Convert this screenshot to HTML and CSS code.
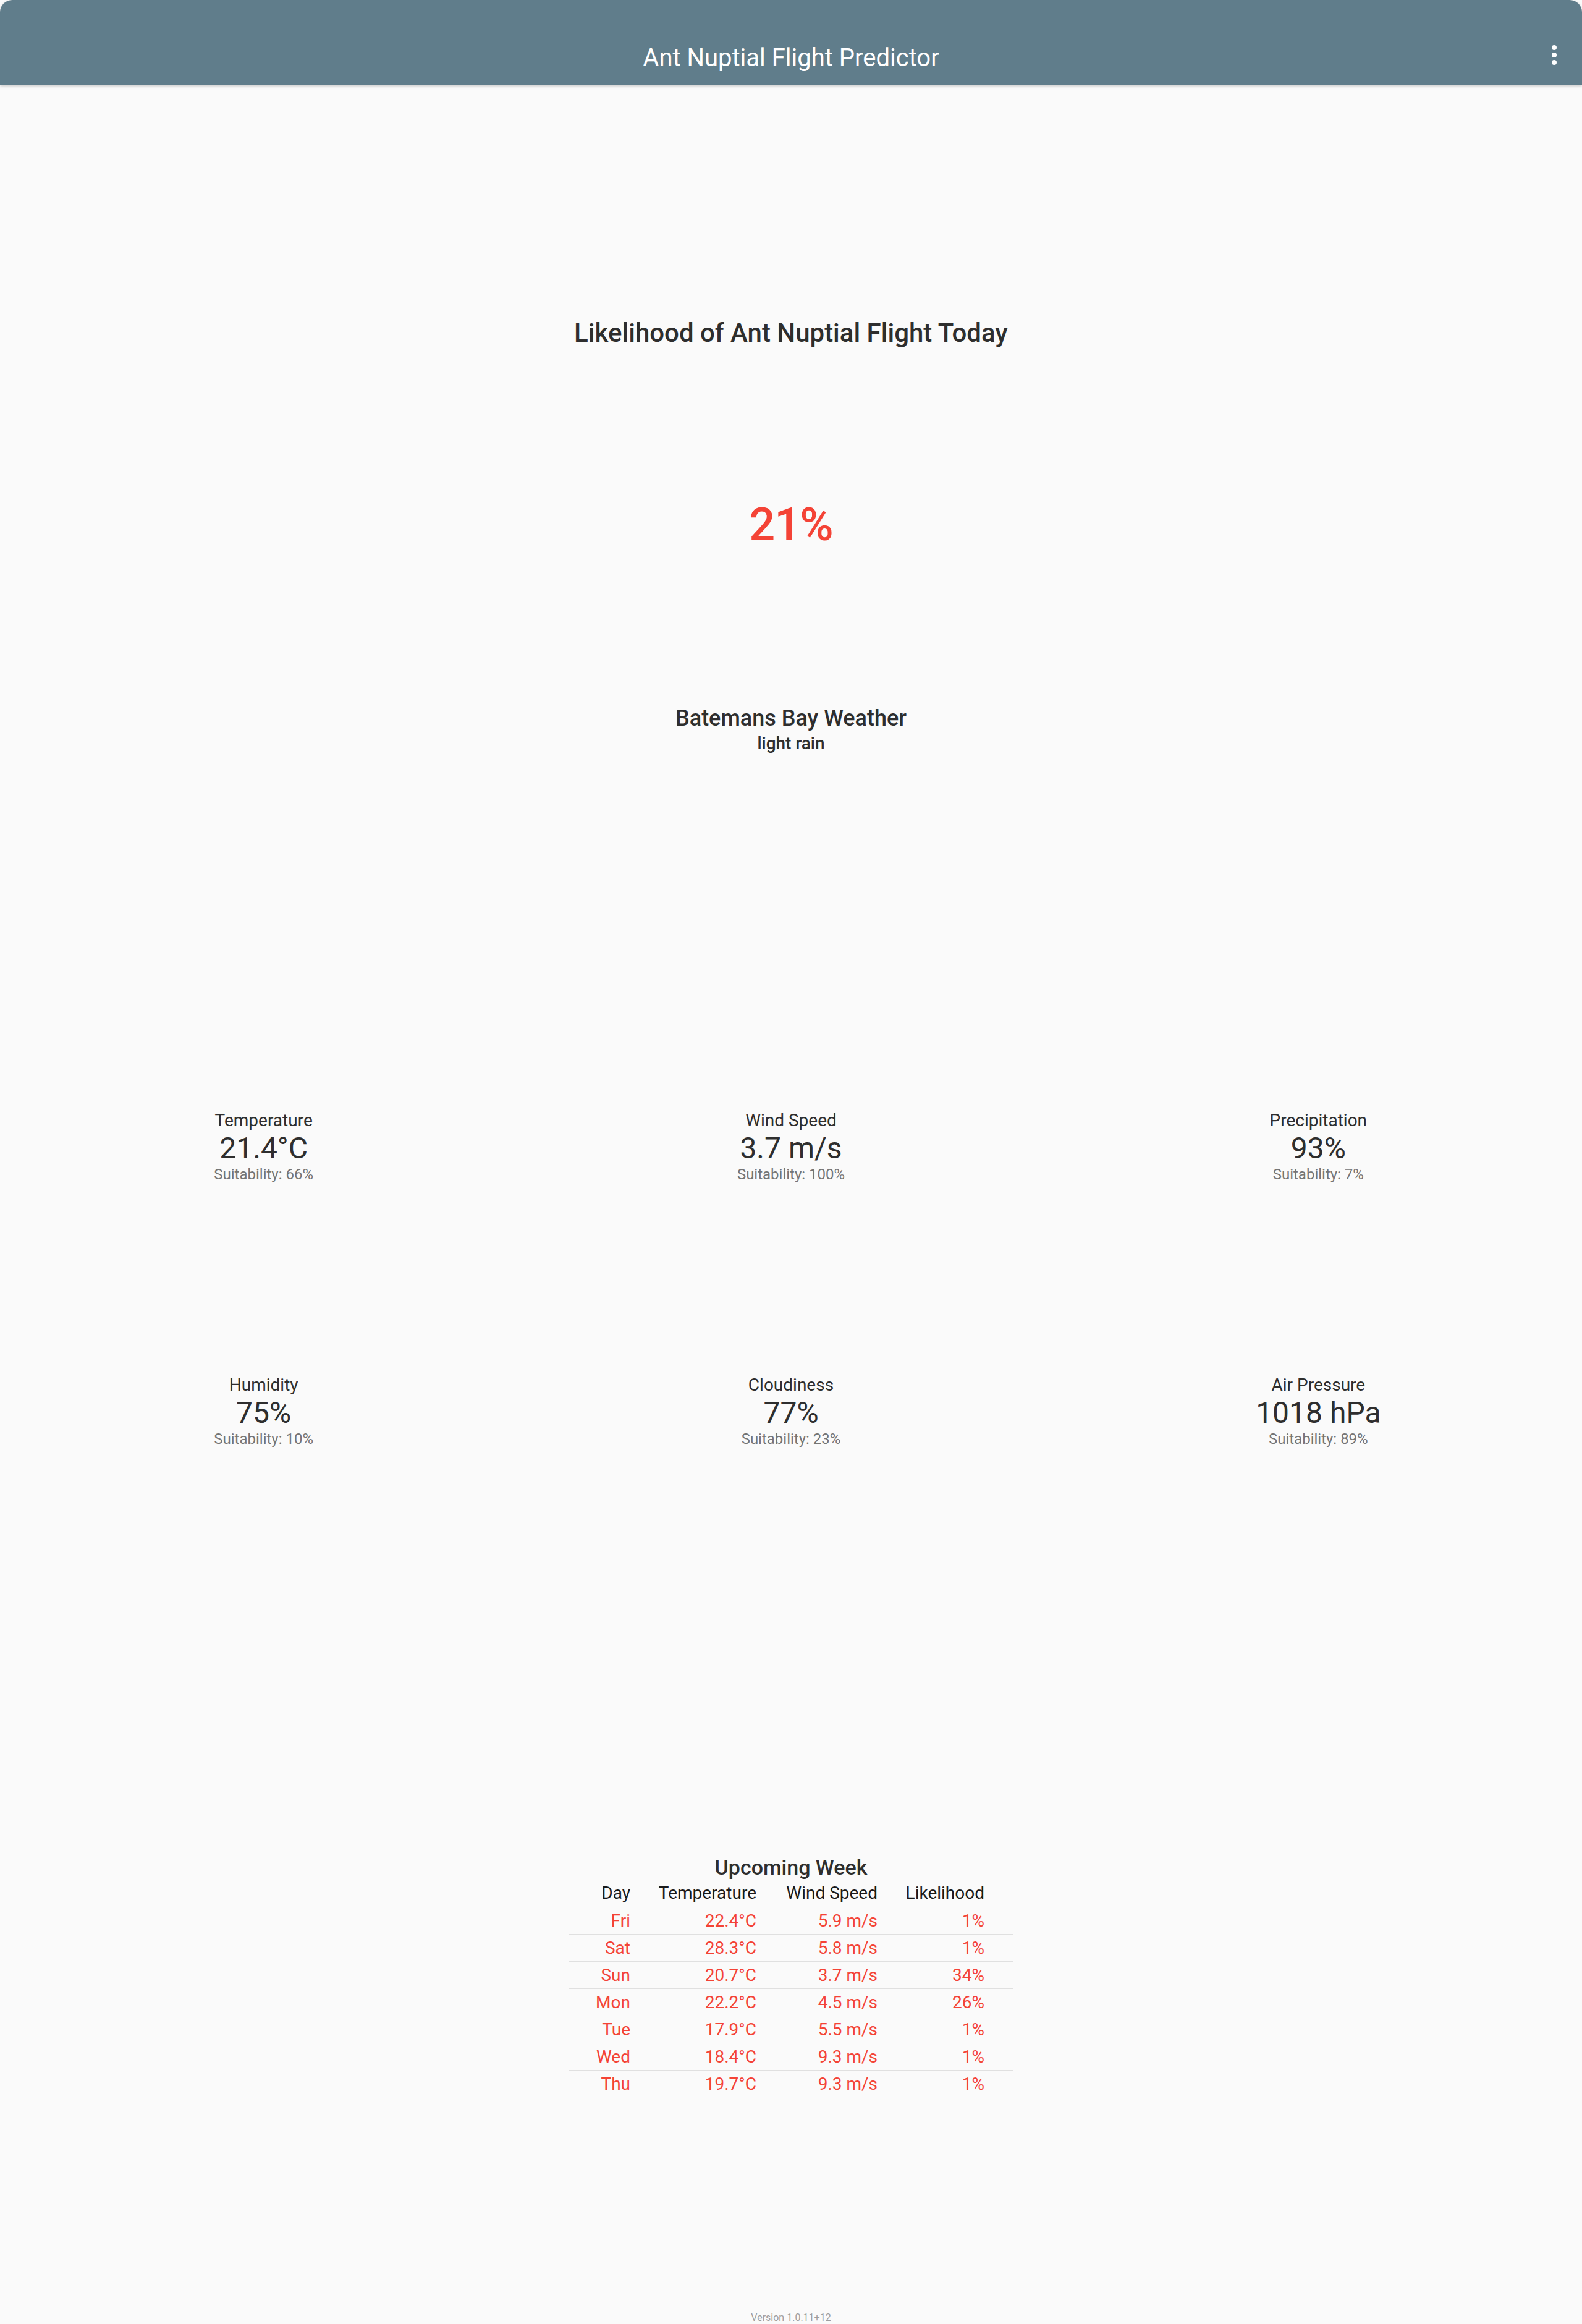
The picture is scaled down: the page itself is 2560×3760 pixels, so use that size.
FILE: index.html
```
<!DOCTYPE html>
<html lang="en">
<head>
<meta charset="utf-8">
<title>Ant Nuptial Flight Predictor</title>
<link rel="stylesheet" href="styles.css">
</head>
<body>
<header class="appbar">
  <div class="appbar-side"></div>
  <h1 class="appbar-title">Ant Nuptial Flight Predictor</h1>
  <div class="appbar-side appbar-actions">
    <svg class="menu-icon" width="10" height="34" viewBox="0 0 10 34" aria-label="More options">
      <circle cx="5" cy="5" r="4" fill="#fff"/>
      <circle cx="5" cy="17" r="4" fill="#fff"/>
      <circle cx="5" cy="29" r="4" fill="#fff"/>
    </svg>
  </div>
</header>
<main class="content">
  <h2 class="hero-title">Likelihood of Ant Nuptial Flight Today</h2>
  <div class="hero-value">21%</div>
  <h3 class="location">Batemans Bay Weather</h3>
  <div class="condition">light rain</div>

  <section class="stats">
    <div class="stat"><div class="stat-label">Temperature</div><div class="stat-value">21.4°C</div><div class="stat-suit">Suitability: 66%</div></div>
    <div class="stat"><div class="stat-label">Wind Speed</div><div class="stat-value">3.7 m/s</div><div class="stat-suit">Suitability: 100%</div></div>
    <div class="stat"><div class="stat-label">Precipitation</div><div class="stat-value">93%</div><div class="stat-suit">Suitability: 7%</div></div>
    <div class="stat"><div class="stat-label">Humidity</div><div class="stat-value">75%</div><div class="stat-suit">Suitability: 10%</div></div>
    <div class="stat"><div class="stat-label">Cloudiness</div><div class="stat-value">77%</div><div class="stat-suit">Suitability: 23%</div></div>
    <div class="stat"><div class="stat-label">Air Pressure</div><div class="stat-value">1018 hPa</div><div class="stat-suit">Suitability: 89%</div></div>
  </section>

  <h3 class="week-title">Upcoming Week</h3>
  <table class="week">
    <thead>
      <tr><th class="c-day">Day</th><th class="c-temp">Temperature</th><th class="c-wind">Wind Speed</th><th class="c-like">Likelihood</th></tr>
    </thead>
    <tbody>
      <tr><td>Fri</td><td>22.4°C</td><td>5.9 m/s</td><td>1%</td></tr>
      <tr><td>Sat</td><td>28.3°C</td><td>5.8 m/s</td><td>1%</td></tr>
      <tr><td>Sun</td><td>20.7°C</td><td>3.7 m/s</td><td>34%</td></tr>
      <tr><td>Mon</td><td>22.2°C</td><td>4.5 m/s</td><td>26%</td></tr>
      <tr><td>Tue</td><td>17.9°C</td><td>5.5 m/s</td><td>1%</td></tr>
      <tr><td>Wed</td><td>18.4°C</td><td>9.3 m/s</td><td>1%</td></tr>
      <tr><td>Thu</td><td>19.7°C</td><td>9.3 m/s</td><td>1%</td></tr>
    </tbody>
  </table>

  <div class="version">Version 1.0.11+12</div>
</main>
</body>
</html>
```

FILE: styles.css
```
html, body {
  margin: 0;
  padding: 0;
}
body {
  background: #fafafa;
  font-family: Roboto, "Noto Sans", "Liberation Sans", sans-serif;
  color: #212121;
  min-height: 3760px;
}
.appbar {
  height: 137px;
  box-sizing: border-box;
  background: #607d8b;
  border-radius: 20px 20px 0 0;
  box-shadow: 0 2px 5px rgba(0, 0, 0, 0.22);
  display: grid;
  grid-template-columns: 1fr auto 1fr;
  align-items: start;
  padding-top: 74px;
}
.appbar-title {
  margin: 0;
  font-size: 40px;
  line-height: 1;
  font-weight: 400;
  color: #ffffff;
  text-align: center;
}
.appbar-actions {
  display: flex;
  justify-content: flex-end;
  padding-right: 40px;
}
.menu-icon {
  display: block;
  margin-top: -2px;
}
.content {
  display: flex;
  flex-direction: column;
  align-items: center;
  text-align: center;
}
.hero-title {
  margin: 381px 0 0;
  font-size: 42px;
  line-height: 1;
  font-weight: 500;
  color: #2e2e2e;
}
.hero-value {
  margin-top: 252px;
  font-size: 74px;
  line-height: 1;
  font-weight: 500;
  color: #f44336;
  letter-spacing: -1px;
}
.location {
  margin: 258px 0 0;
  font-size: 36px;
  line-height: 1;
  font-weight: 500;
  color: #2e2e2e;
}
.condition {
  margin-top: 9px;
  font-size: 28px;
  line-height: 1;
  font-weight: 500;
  color: #2e2e2e;
}
.stats {
  margin-top: 582px;
  width: 100%;
  display: grid;
  grid-template-columns: repeat(3, 1fr);
  row-gap: 315px;
}
.stat {
  display: flex;
  flex-direction: column;
  align-items: center;
}
.stat-label {
  font-size: 28px;
  line-height: 1;
  color: #2e2e2e;
}
.stat-value {
  margin-top: 7px;
  font-size: 48px;
  line-height: 1;
  color: #2e2e2e;
}
.stat-suit {
  margin-top: 6px;
  font-size: 24px;
  line-height: 1;
  color: #757575;
}
.week-title {
  margin: 664px 0 0;
  font-size: 34px;
  line-height: 1;
  font-weight: 500;
  color: #2e2e2e;
}
.week {
  margin-top: 3px;
  width: 720px;
  table-layout: fixed;
  border-collapse: collapse;
  font-size: 28px;
}
.week th, .week td {
  padding: 0;
  text-align: right;
  font-weight: 400;
  white-space: nowrap;
}
.week th {
  height: 44px;
  line-height: 44px;
  color: #1a1a1a;
}
.week td {
  height: 43px;
  line-height: 43px;
  color: #f44336;
}
.week tbody tr {
  border-top: 1px solid #e0e0e0;
}
.c-day { width: 100px; }
.c-temp { width: 204px; }
.c-wind { width: 196px; }
.c-like { width: 173px; }
.week th:last-child, .week td:last-child {
  padding-right: 47px;
}
.version {
  margin-top: 349px;
  font-size: 16px;
  line-height: 1;
  color: #9e9e9e;
}
```
